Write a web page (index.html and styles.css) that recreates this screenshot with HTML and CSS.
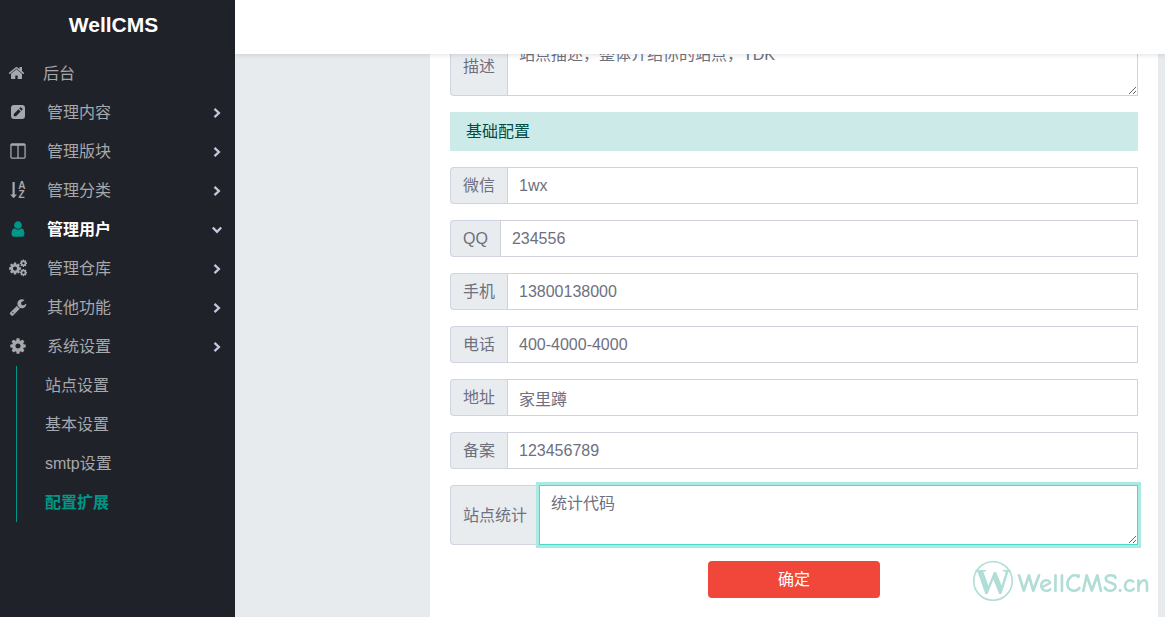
FILE: index.html
```html
<!DOCTYPE html>
<html lang="zh-CN">
<head>
<meta charset="utf-8">
<title>WellCMS</title>
<link rel="stylesheet" href="styles.css">
</head>
<body>
<svg class="defs" aria-hidden="true">
  <symbol id="cog" viewBox="0 0 1792 1792"><path d="M1152 896q0-106-75-181t-181-75-181 75-75 181 75 181 181 75 181-75 75-181zm512-109v222q0 12-8 23t-20 13l-185 28q-19 54-39 91 35 50 107 138 10 12 10 25t-9 23q-27 37-99 108t-94 71q-12 0-26-9l-138-108q-44 23-91 38-16 136-29 186-7 28-36 28h-222q-14 0-24.5-8.5t-11.5-21.5l-28-184q-49-16-90-37l-141 107q-10 9-25 9-14 0-25-11-126-114-165-168-7-10-7-23 0-12 8-23 15-21 51-66.5t54-70.5q-27-50-41-99l-183-27q-13-2-21-12.5t-8-23.5v-222q0-12 8-23t19-13l186-28q14-46 39-92-40-57-107-138-10-12-10-24 0-10 9-23 26-36 98.5-107.5t94.5-71.5q13 0 26 10l138 107q44-23 91-38 16-136 29-186 7-28 36-28h222q14 0 24.5 8.5t11.5 21.5l28 184q49 16 90 37l142-107q9-9 24-9 13 0 25 10 129 119 165 170 7 8 7 22 0 12-8 23-15 21-51 66.5t-54 70.5q26 50 41 98l183 28q13 2 21 12.5t8 23.5z"/></symbol>
  <symbol id="chevron" viewBox="0 0 12 12"><path d="M3.500 1.800 7.900 6 3.500 10.200" fill="none" stroke="currentColor" stroke-width="2.300"/></symbol>
</svg>
<div class="layout">
  <aside class="sidebar">
    <a class="brand" href="#">WellCMS</a>
    <nav>
      <ul class="menu">
        <li><a class="item home" href="#"><svg class="icon" viewBox="0 0 1792 1792"><path d="M1472 992v480q0 26-19 45t-45 19h-384v-384h-256v384h-384q-26 0-45-19t-19-45v-480q0-1 .5-3t.5-3l575-474 575 474q1 2 1 6zm223-69l-62 74q-8 9-21 11h-3q-13 0-21-7l-692-577-692 577q-12 8-24 7-13-2-21-11l-62-74q-8-10-7-23.500t11-21.500l719-599q32-26 76-26t76 26l244 204v-195q0-14 9-23t23-9h192q14 0 23 9t9 23v408l219 182q10 8 11 21.500t-7 23.500z"/></svg><span>后台</span></a></li>
        <li><a class="item" href="#"><svg class="icon" viewBox="0 0 18 18"><path fill-rule="evenodd" d="M5 2h8a3 3 0 0 1 3 3v8a3 3 0 0 1-3 3H5a3 3 0 0 1-3-3V5a3 3 0 0 1 3-3zM4.800 11v2.200h2.200l4.700-4.700L9.500 6.300zM10.300 5.500l2.200 2.200.9-.9a.8.8 0 0 0 0-1.100l-1.100-1.100a.8.8 0 0 0-1.100 0z"/></svg><span>管理内容</span><svg class="arrow"><use href="#chevron"/></svg></a></li>
        <li><a class="item" href="#"><svg class="icon" viewBox="0 0 1792 1792"><path d="M288 1536h544v-1152h-576v1120q0 13 9.500 22.500t22.500 9.500zm1248-32v-1120h-576v1152h544q13 0 22.500-9.500t9.500-22.500zm128-1216v1216q0 66-47 113t-113 47h-1216q-66 0-113-47t-47-113v-1216q0-66 47-113t113-47h1216q66 0 113 47t47 113z"/></svg><span>管理版块</span><svg class="arrow"><use href="#chevron"/></svg></a></li>
        <li><a class="item" href="#"><svg class="icon" viewBox="0 0 18 18" aria-hidden="true"><path d="M3.500 1h2.200v12.500H8L4.600 17.300 1.200 13.500h2.300z"/><text class="sort" x="9.300" y="8.300">A</text><text class="sort" x="9.500" y="17">Z</text></svg><span>管理分类</span><svg class="arrow"><use href="#chevron"/></svg></a></li>
        <li><a class="item current" href="#"><svg class="icon" viewBox="0 0 1792 1792"><path d="M1536 1399q0 109-62.500 187t-150.500 78h-854q-88 0-150.500-78t-62.500-187q0-85 8.500-160.500t31.500-152 58.500-131 94-89 134.500-34.500q131 128 313 128t313-128q76 0 134.500 34.500t94 89 58.500 131 31.500 152 8.500 160.500zm-256-887q0 159-112.500 271.500t-271.500 112.500-271.500-112.500-112.500-271.500 112.500-271.500 271.500-112.500 271.500 112.500 112.500 271.500z"/></svg><span>管理用户</span><svg class="arrow open"><use href="#chevron"/></svg></a></li>
        <li><a class="item" href="#"><svg class="icon" viewBox="0 0 18 18"><use href="#cog" x="-1" y="2.500" width="14" height="14"/><use href="#cog" x="10.200" y="0" width="8.500" height="8.500"/><use href="#cog" x="10.200" y="9.300" width="8.500" height="8.500"/></svg><span>管理仓库</span><svg class="arrow"><use href="#chevron"/></svg></a></li>
        <li><a class="item" href="#"><svg class="icon" viewBox="0 0 1792 1792"><path d="M448 1472q0-26-19-45t-45-19-45 19-19 45 19 45 45 19 45-19 19-45zm644-420l-682 682q-37 37-90 37-52 0-91-37l-106-108q-38-36-38-90 0-53 38-91l681-681q39 98 114.500 173.500t173.500 114.500zm634-435q0 39-23 106-47 134-164.500 217.500t-258.500 83.500q-185 0-316.500-131.500t-131.500-316.500 131.500-316.500 316.500-131.500q58 0 121.500 16.500t107.500 46.500q16 11 16 28t-16 28l-293 169v224l193 107q5-3 79-48.500t135.500-81 70.500-35.500q15 0 23.500 10t8.500 25z"/></svg><span>其他功能</span><svg class="arrow"><use href="#chevron"/></svg></a></li>
        <li><a class="item" href="#"><svg class="icon"><use href="#cog"/></svg><span>系统设置</span><svg class="arrow"><use href="#chevron"/></svg></a>
          <ul class="submenu">
            <li><a href="#">站点设置</a></li>
            <li><a href="#">基本设置</a></li>
            <li><a href="#">smtp设置</a></li>
            <li><a class="active" href="#">配置扩展</a></li>
          </ul>
        </li>
      </ul>
    </nav>
  </aside>
  <header class="topbar"></header>
  <main class="content">
    <form class="card">
      <div class="group"><label for="desc">描述</label><textarea id="desc" rows="2">站点描述，整体介绍你的站点，TDK</textarea></div>
      <h2 class="section">基础配置</h2>
      <div class="group"><label for="wx">微信</label><input id="wx" type="text" value="1wx"></div>
      <div class="group"><label for="qq">QQ</label><input id="qq" type="text" value="234556"></div>
      <div class="group"><label for="mobile">手机</label><input id="mobile" type="text" value="13800138000"></div>
      <div class="group"><label for="tel">电话</label><input id="tel" type="text" value="400-4000-4000"></div>
      <div class="group"><label for="addr">地址</label><input id="addr" type="text" value="家里蹲"></div>
      <div class="group"><label for="icp">备案</label><input id="icp" type="text" value="123456789"></div>
      <div class="group"><label for="stats">站点统计</label><textarea id="stats" class="focused" rows="2">统计代码</textarea></div>
      <button class="submit" type="button">确定</button>
    </form>
  </main>
  <div class="watermark">
    <svg class="mark" viewBox="0 0 42 42" aria-hidden="true"><circle cx="21" cy="21" r="19.300" fill="none" stroke="currentColor" stroke-width="1.600"/><text x="21" y="34" text-anchor="middle">W</text></svg>
    <span>WellCMS.cn</span>
  </div>
</div>
</body>
</html>
```
FILE: styles.css
```css
* { box-sizing: border-box; }
body {
  margin: 0;
  overflow: hidden;
  background: #e8ebee;
  font: 16px/23px "Liberation Sans", "Noto Sans CJK SC", sans-serif;
  color: #6e707e;
}
a { color: inherit; text-decoration: none; }
ul { list-style: none; margin: 0; padding: 0; }
.defs { display: none; }
.layout { display: flex; height: 100vh; }

.sidebar { flex: 0 0 235px; background: #20222a; color: #a6a8ac; }
.brand {
  display: block;
  height: 54px;
  padding-right: 8px;
  line-height: 50px;
  font-size: 21px;
  font-weight: bold;
  color: #fff;
  text-align: center;
}
.item { display: flex; align-items: center; height: 39px; padding: 0 12px 0 9px; }
.item span { flex: 1; padding-left: 20px; }
.icon { flex: none; width: 18px; height: 18px; margin-bottom: 2px; fill: currentColor; }
.home { padding-left: 8px; }
.home .icon { width: 17px; }
.home span { padding-left: 18px; }
.arrow { width: 12px; height: 12px; color: #c4c6dc; }
.arrow.open { transform: rotate(90deg); }
.sort { font: bold 10px "Liberation Sans", sans-serif; }
.current { color: #fff; font-weight: bold; }
.current .icon { color: #009688; }
.submenu { margin-left: 16px; border-left: 1px solid #009688; }
.submenu a { display: block; padding-left: 28px; line-height: 39px; }
.submenu .active { color: #009688; font-weight: bold; }

.topbar {
  position: fixed;
  z-index: 2;
  top: 0;
  left: 235px;
  right: 0;
  height: 54px;
  background: #fff;
  box-shadow: 0 1px 5px rgba(0, 0, 0, .12);
}
.content { flex: 1; display: flex; padding: 0 7px 0 195px; }
.card {
  flex: 1;
  display: flex;
  flex-direction: column;
  gap: 16px;
  padding: 36px 20px 16px;
  background: #fff;
}
.group { display: flex; }
.group label {
  display: flex;
  align-items: center;
  padding: 0 12px;
  background: #e9ecef;
  border: 1px solid #d1d3e2;
  border-right: 0;
  border-radius: 4px 0 0 4px;
}
.group input, .group textarea {
  flex: 1;
  min-width: 0;
  margin: 0;
  padding: 6px 11px;
  border: 1px solid #d1d3dc;
  border-radius: 0;
  background: #fff;
  font: inherit;
  color: inherit;
  outline: 0;
}
.group input { height: 37px; }
.group textarea { resize: vertical; overflow: hidden; }
.group .focused { border-color: #4dd8c8; box-shadow: 0 0 0 3px #a9ebe2; }
.section {
  margin: 0;
  padding: 8px 16px;
  background: #cceae7;
  color: #004e47;
  font-size: 16px;
  font-weight: normal;
}
.submit {
  align-self: center;
  width: 25%;
  height: 37px;
  border: 0;
  border-radius: 4px;
  background: #f1473a;
  color: #fff;
  font: inherit;
}

.watermark {
  position: fixed;
  z-index: 3;
  right: 15px;
  bottom: 15px;
  display: flex;
  align-items: center;
  gap: 3px;
  color: #b1ddd7;
  font: bold 27px/36px "Comic Sans MS", "Comic Neue", Lato, sans-serif;
}
.watermark span { padding-top: 6px; }
.mark { width: 42px; height: 42px; fill: currentColor; }
.mark text { font: bold 36px "Liberation Serif", serif; }
```
